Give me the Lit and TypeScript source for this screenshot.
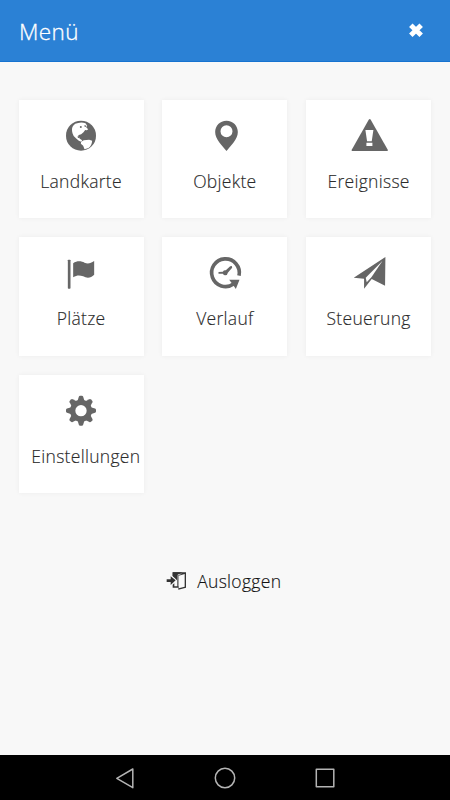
import { LitElement, html, css, svg } from "lit";
import { customElement } from "lit/decorators.js";

interface Tile {
  label: string;
  viewBox: string;
  shift: number;
  icon: unknown;
}

const gearTeeth = [0, 45, 90, 135, 180, 225, 270, 315];

const tiles: Tile[] = [
  {
    label: "Landkarte",
    viewBox: "147.5 69 132 120",
    shift: 0,
    icon: svg`<circle cx="213.5" cy="131" r="45"/>
      <path fill="#fff" d="M190 101Q195 94 205 93Q216 90 227 94L232 101L229 106L235 112L231 115L226 114L221 121L214 127L207 129L204 133L208 136L210 140L217 145L214 149L207 146L200 140Q190 135 188 124Q184 109 190 101Z"/>
      <path fill="#fff" d="M214 149L222 145L238 143L247 146Q246 160 236 168L224 172L220 161L213 155Z"/>
      <circle cx="213" cy="105" r="3"/><path d="M225 99l5 3l-2 3l-5-2ZM203 133l5 2l1 4l-5-2Z"/>`,
  },
  {
    label: "Objekte",
    viewBox: "143.5 69 132 120",
    shift: 0,
    icon: svg`<path fill-rule="evenodd" d="M214 86C194 86 180 101 180 120C180 142 201 161 214 177C227 161 248 142 248 120C248 101 234 86 214 86ZM214 100A18 18 0 1 1 214 136A18 18 0 1 1 214 100Z"/>`,
  },
  {
    label: "Ereignisse",
    viewBox: "139.8 69 132 120",
    shift: 0,
    icon: svg`<path d="M205 83Q208 79 211 83L262 173Q264 177 260 177H156Q152 177 154 173Z"/>
      <path fill="#fff" d="M195 114H219L214 148H200ZM198 152H216V162H198Z"/>`,
  },
  {
    label: "Plätze",
    viewBox: "147.5 67 132 120",
    shift: 0,
    icon: svg`<rect x="174" y="90" width="8" height="87" rx="2"/>
      <path d="M190 101C202 92 216 95 224 99C235 104 243 100 253 94V135C243 146 231 146 220 140C209 136 201 136 190 143Z"/>`,
  },
  {
    label: "Verlauf",
    viewBox: "143.5 67 132 120",
    shift: 0,
    icon: svg`<path fill="none" stroke="#666" stroke-width="11" d="M251.500 138A41.500 41.500 0 1 0 235 163"/>
      <path d="M222 150H253L242 178L236 169L230 161Z"/>
      <path d="M190 127L203 126Q206 121 212 122L225 110L230 109L231 114L218 129Q217 137 210 137Q206 137 203 132H190Z"/>`,
  },
  {
    label: "Steuerung",
    viewBox: "139.8 67 132 120",
    shift: 0,
    icon: svg`<path d="M255 82L160 144L191 147V177L214 148L254 168Z"/>
      <path fill="#fff" d="M246 94L196 144L199 158L213 143Z"/>`,
  },
  {
    label: "Einstellungen",
    viewBox: "147.5 66 132 120",
    shift: 4.75,
    icon: svg`<circle cx="213.500" cy="128" r="25" fill="none" stroke="#666" stroke-width="16"/>
      ${gearTeeth.map(
        (a) =>
          svg`<path transform="rotate(${a} 213.500 128)" d="M203 99L207 86Q208 83 211 83H216Q219 83 220 86L224 99Z"/>`
      )}`,
  },
];

@customElement("app-root")
export class AppRoot extends LitElement {
  static styles = css`
    :host {
      display: flex;
      flex-direction: column;
      height: 800px;
      background: #f8f8f8;
      font-family: "Open Sans", "Noto Sans", sans-serif;
      font-weight: 300;
      overflow: hidden;
    }
    svg {
      display: block;
      flex: none;
    }
    header {
      display: flex;
      align-items: center;
      justify-content: space-between;
      box-sizing: border-box;
      height: 62.2px;
      padding: 0 24px 0 19px;
      background: #2b81d5;
      border-bottom: 1px solid #1673d0;
      color: #fff;
    }
    h1 {
      margin: 0;
      padding-top: 3px;
      font-size: 22.5px;
      font-weight: 300;
      letter-spacing: 0.4px;
      line-height: 30px;
      -webkit-text-stroke: 0.3px #fff;
    }
    main {
      flex: 1;
      display: flex;
      flex-direction: column;
      align-items: center;
    }
    .grid {
      display: grid;
      grid-template-columns: repeat(3, 125px);
      grid-auto-rows: 118.75px;
      gap: 18.75px;
      padding-top: 37.5px;
      margin-right: 0.3px;
    }
    .tile {
      display: flex;
      flex-direction: column;
      align-items: center;
      box-sizing: border-box;
      padding-top: 15px;
      background: #fff;
      box-shadow: 0 0 5px rgba(0, 0, 0, 0.05);
      color: #2b2b2b;
      fill: #666;
    }
    .label {
      margin-top: 13px;
      font-size: 17.5px;
      line-height: 26px;
      letter-spacing: 0.3px;
      white-space: nowrap;
      -webkit-text-stroke: 0.15px #2b2b2b;
    }
    .logout {
      display: flex;
      align-items: center;
      gap: 10px;
      margin-top: 74.6px;
      margin-right: 2.5px;
      color: #111;
      font-size: 17.5px;
      line-height: 26px;
      letter-spacing: 0.3px;
      -webkit-text-stroke: 0.15px #111;
    }
    nav {
      display: flex;
      align-items: center;
      justify-content: center;
      gap: 76px;
      height: 45px;
      background: #000;
      fill: none;
      stroke: #b4b4b4;
      stroke-width: 1.5;
      stroke-linejoin: round;
    }
  `;

  render() {
    return html`
      <header>
        <h1>Menü</h1>
        <svg width="20" height="20" viewBox="0 0 20 20">
          <path d="M4.800 4.300L15.200 14.200M15.200 4.300L4.800 14.200" stroke="#fff" stroke-width="5" />
        </svg>
      </header>
      <main>
        <div class="grid">
          ${tiles.map(
            (t) => html`<div class="tile">
              <svg width="44" height="40" viewBox=${t.viewBox}>${t.icon}</svg>
              <span class="label" style="transform:translateX(${t.shift}px)">${t.label}</span>
            </div>`
          )}
        </div>
        <div class="logout">
          <svg width="21" height="20" viewBox="33 32 63 60" fill="#333">
            <path d="M35 57H47V48L62 60L47 74V65H35Z" />
            <path d="M53 36H93V82L70 88V82H53V73L58 69V78H70V44L82 40H63V54L53 47Z" />
            <path d="M53 36H82L68 43V80H66V60L53 47Z" />
            <path fill="#f8f8f8" d="M71 46L89 41V79L71 84Z" />
          </svg>
          <span>Ausloggen</span>
        </div>
      </main>
      <nav>
        <svg width="24" height="24" viewBox="0 0 24 24"><path d="M3.800 12.300L19.800 3V21.700Z" /></svg>
        <svg width="24" height="24" viewBox="0 0 24 24"><circle cx="12" cy="12" r="9.700" /></svg>
        <svg width="24" height="24" viewBox="0 0 24 24"><rect x="3.300" y="3.300" width="17.500" height="17.500" /></svg>
      </nav>
    `;
  }
}
